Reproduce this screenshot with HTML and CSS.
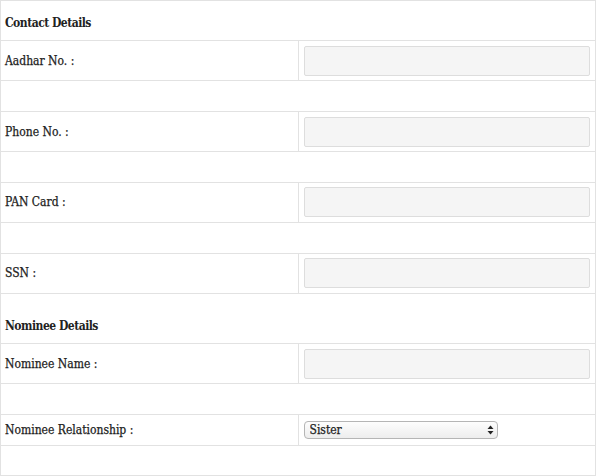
FILE: index.html
```html
<!DOCTYPE html>
<html lang="en">
<head>
    <meta charset="UTF-8">
    <meta name="viewport" content="width=device-width, initial-scale=1.0">
    <title>Contact Details</title>
    <link rel="stylesheet" href="styles.css">
</head>
<body>
    <table class="details">
        <tr class="section">
            <td colspan="2">Contact Details</td>
        </tr>
        <tr class="field">
            <td class="label">Aadhar No. :</td>
            <td class="value"><input type="text" class="text-input"></td>
        </tr>
        <tr class="gap"><td colspan="2"></td></tr>
        <tr class="field">
            <td class="label">Phone No. :</td>
            <td class="value"><input type="text" class="text-input"></td>
        </tr>
        <tr class="gap"><td colspan="2"></td></tr>
        <tr class="field">
            <td class="label">PAN Card :</td>
            <td class="value"><input type="text" class="text-input"></td>
        </tr>
        <tr class="gap"><td colspan="2"></td></tr>
        <tr class="field">
            <td class="label">SSN :</td>
            <td class="value"><input type="text" class="text-input"></td>
        </tr>
        <tr class="section tall">
            <td colspan="2">Nominee Details</td>
        </tr>
        <tr class="field">
            <td class="label">Nominee Name :</td>
            <td class="value"><input type="text" class="text-input"></td>
        </tr>
        <tr class="gap"><td colspan="2"></td></tr>
        <tr class="field short">
            <td class="label">Nominee Relationship :</td>
            <td class="value">
                <span class="select-wrap">
                    <select class="select-input">
                        <option>Sister</option>
                        <option>Brother</option>
                        <option>Mother</option>
                        <option>Father</option>
                        <option>Spouse</option>
                    </select>
                    <svg class="select-arrows" width="7" height="10" viewBox="0 0 7 10">
                        <path d="M3.5 0.5 L6.5 4 L0.5 4 Z" fill="#222"/>
                        <path d="M3.5 9.5 L6.5 6 L0.5 6 Z" fill="#222"/>
                    </svg>
                </span>
            </td>
        </tr>
        <tr class="gap"><td colspan="2"></td></tr>
    </table>
</body>
</html>
```

FILE: styles.css
```css
body {
    margin: 0;
    font-family: "DejaVu Serif", "Liberation Serif", serif;
    font-size: 12px;
    font-stretch: semi-condensed;
    -webkit-text-stroke: 0.25px #222;
    color: #222;
    background-color: #fff;
}
.details {
    width: 596px;
    border-collapse: collapse;
    table-layout: fixed;
}
.details td {
    border: 1px solid #e2e2e2;
    padding: 0 4px;
}
.section td {
    height: 40px;
    vertical-align: bottom;
    padding-bottom: 10px;
    font-weight: bold;
    letter-spacing: -0.5px;
    -webkit-text-stroke: 0;
    box-sizing: border-box;
}
.section.tall td {
    height: 50px;
}
.field td {
    height: 40.3px;
    box-sizing: border-box;
}
.field .value {
    padding: 0 5px;
}
.field.short td {
    height: 31px;
}
.label {
    width: 297px;
    box-sizing: border-box;
}
.gap td {
    height: 30.6px;
    box-sizing: border-box;
}
.text-input {
    display: block;
    width: 100%;
    height: 30px;
    box-sizing: border-box;
    border: 1px solid #ddd;
    border-radius: 2px;
    background-color: #f5f5f5;
    margin: 0;
}
.select-wrap {
    position: relative;
    display: inline-block;
    width: 194px;
    vertical-align: middle;
}
.select-input {
    appearance: none;
    -webkit-appearance: none;
    display: block;
    width: 100%;
    height: 18px;
    margin: 0;
    padding: 0 5px;
    box-sizing: border-box;
    border: 1px solid #b5b5b5;
    border-radius: 4px;
    background: linear-gradient(#fdfdfd, #ededed);
    font-family: "DejaVu Serif", "Liberation Serif", serif;
    font-size: 12px;
    font-stretch: semi-condensed;
    -webkit-text-stroke: 0.25px #222;
    color: #222;
}
.select-arrows {
    position: absolute;
    right: 4px;
    top: 4px;
    pointer-events: none;
}
```
